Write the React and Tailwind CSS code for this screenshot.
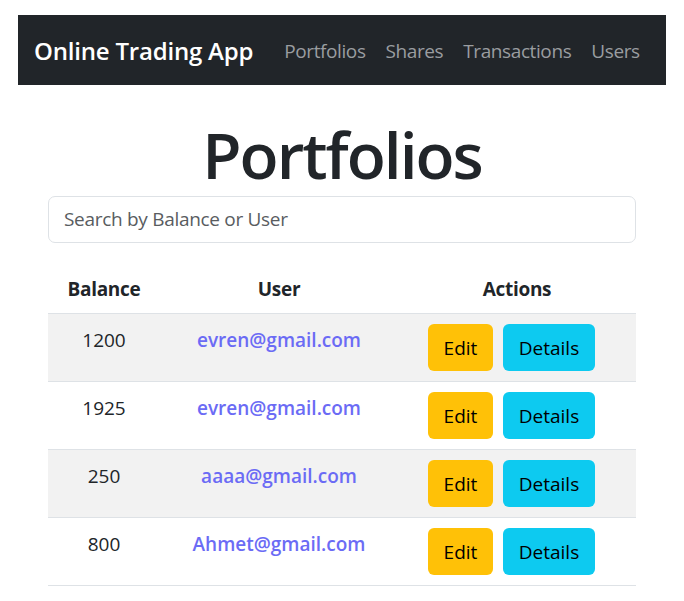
export default function App() {
  const rows = [
    { balance: "1200", user: "evren@gmail.com", striped: true },
    { balance: "1925", user: "evren@gmail.com", striped: false },
    { balance: "250", user: "aaaa@gmail.com", striped: true },
    { balance: "800", user: "Ahmet@gmail.com", striped: false },
  ];
  return (
    <div
      className="min-h-[601px] bg-white pt-[15px] px-[18px] text-[#212529]"
      style={{ fontFamily: '"Open Sans", "Noto Sans", sans-serif' }}
    >
      <nav className="h-[70px] bg-[#212529] flex items-center pl-[16px] pt-[2px]">
        <span className="text-white text-[24px] font-semibold tracking-[-0.2px]">Online Trading App</span>
        <div className="flex ml-[31px] gap-[20px] text-[19px] text-[#9a9da0] tracking-[-0.4px]">
          <span>Portfolios</span>
          <span>Shares</span>
          <span>Transactions</span>
          <span>Users</span>
        </div>
      </nav>
      <div className="mx-[30px]">
        <h1 className="text-center text-[64px] font-semibold leading-[80px] mt-[30px] tracking-[-2px]">Portfolios</h1>
        <div className="mt-[1px] h-[47px] border border-[#dee2e6] rounded-[7px] flex items-center pl-[15px] text-[19px] text-[#595c5f] tracking-[-0.3px]">
          Search by Balance or User
        </div>
        <div className="mt-[23px] text-[19px]">
          <div className="grid grid-cols-[112px_238px_238px] h-[48px] items-center font-bold border-b border-[#dee2e6] text-center tracking-[-0.3px]">
            <div>Balance</div>
            <div>User</div>
            <div>Actions</div>
          </div>
          {rows.map((r, i) => (
            <div
              key={i}
              className={`grid grid-cols-[112px_238px_238px] h-[68px] border-b border-[#dee2e6] text-center ${r.striped ? "bg-[#f2f2f2]" : "bg-white"}`}
            >
              <div className="pt-[12px] leading-[28px]">{r.balance}</div>
              <div className="pt-[12px] leading-[28px] font-semibold text-[#6b6bf5]">{r.user}</div>
              <div className="flex justify-center pt-[10px] pr-[1px]">
                <span className="h-[47px] w-[65px] pt-[2px] rounded-[6px] bg-[#ffc107] flex items-center justify-center text-black mr-[10px]">Edit</span>
                <span className="h-[47px] w-[92px] pt-[2px] rounded-[6px] bg-[#0dcaf0] flex items-center justify-center text-black mr-[10px]">Details</span>
              </div>
            </div>
          ))}
        </div>
      </div>
    </div>
  );
}
